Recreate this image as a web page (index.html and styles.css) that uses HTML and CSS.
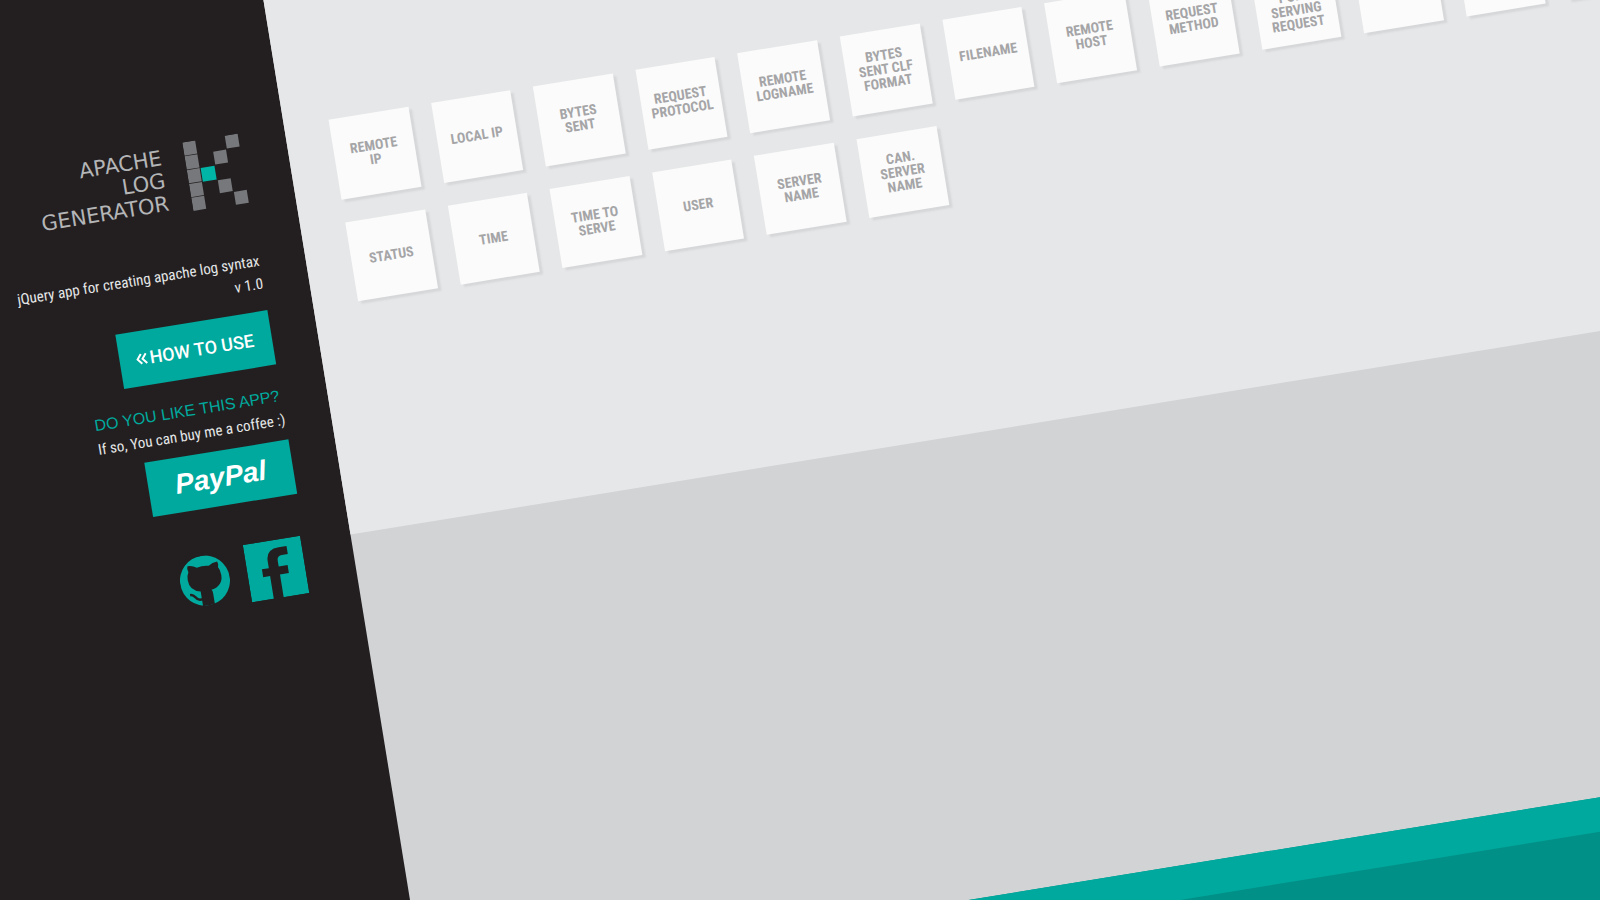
FILE: index.html
```html
<!DOCTYPE html>
<html lang="en">
<head>
<meta charset="utf-8">
<title>Apache Log Generator</title>
<link rel="stylesheet" href="styles.css">
</head>
<body>
<div class="stage">
  <aside class="sidebar">
    <div class="brand">
      <h1 class="brand-name">APACHE<br>LOG<br>GENERATOR</h1>
      <svg class="brand-mark" viewBox="0 0 57 71" aria-hidden="true">
        <g fill="#77787b">
          <rect x="0" y="0" width="13" height="13.300"/>
          <rect x="0" y="14" width="13" height="13.300"/>
          <rect x="0" y="28" width="13" height="13.300"/>
          <rect x="0" y="42" width="13" height="13.300"/>
          <rect x="0" y="56" width="13" height="13.300"/>
          <rect x="43" y="0" width="13" height="13"/>
          <rect x="29" y="14" width="13" height="13"/>
          <rect x="29" y="43" width="13" height="13"/>
          <rect x="43" y="57" width="13" height="13"/>
        </g>
        <rect x="14" y="28" width="14" height="14" fill="#00b5a5"/>
      </svg>
    </div>
    <p class="about">jQuery app for creating apache log syntax<br>v 1.0</p>
    <button class="btn how" type="button">
      <svg class="chevrons" viewBox="0 0 12 12" aria-hidden="true"><path d="M6 1L2 6l4 5M11 1L7 6l4 5" fill="none" stroke="#fff" stroke-width="2"/></svg>
      HOW TO USE
    </button>
    <h2 class="ask">DO YOU LIKE THIS APP?</h2>
    <p class="coffee">If so, You can buy me a coffee :)</p>
    <a class="btn paypal" href="#paypal">PayPal</a>
    <nav class="social">
      <a class="github" href="#github" aria-label="GitHub">
        <svg viewBox="0 0 50 50" aria-hidden="true">
          <circle cx="25" cy="25" r="25" fill="#00a99d"/>
          <path fill="#231f20" d="M10 8Q15 8 19 11Q25 9.500 31 11Q35 8 40 8Q41.500 11 40 14Q42 17 42 22Q42 33 30 35Q31 36 31 39V50H19V35Q8 33 8 22Q8 17 10 14Q8.500 11 10 8Z"/>
          <path fill="none" stroke="#231f20" stroke-width="2.500" d="M20 43Q15 44 13 40Q11 37 8 37"/>
        </svg>
      </a>
      <a class="facebook" href="#facebook" aria-label="Facebook">
        <svg viewBox="0 0 58 58" aria-hidden="true"><path fill="#00a99d" d="M0 0H58V58H32V35H41V27H32V21Q32 16 37 16H43V8H35Q22 8 22 20V27H15V35H22V58H0Z"/></svg>
      </a>
    </nav>
  </aside>
  <main class="board">
    <section class="palette">
      <ul class="tiles">
        <li class="tile">REMOTE<br>IP</li>
        <li class="tile">LOCAL IP</li>
        <li class="tile">BYTES<br>SENT</li>
        <li class="tile">REQUEST<br>PROTOCOL</li>
        <li class="tile">REMOTE<br>LOGNAME</li>
        <li class="tile">BYTES<br>SENT CLF<br>FORMAT</li>
        <li class="tile">FILENAME</li>
        <li class="tile">REMOTE<br>HOST</li>
        <li class="tile">REQUEST<br>METHOD</li>
        <li class="tile tile-low">PORT<br>SERVING<br>REQUEST</li>
        <li class="tile"></li>
        <li class="tile"></li>
        <li class="tile"></li>
        <li class="tile">STATUS</li>
        <li class="tile">TIME</li>
        <li class="tile">TIME TO<br>SERVE</li>
        <li class="tile">USER</li>
        <li class="tile">SERVER<br>NAME</li>
        <li class="tile">CAN.<br>SERVER<br>NAME</li>
      </ul>
    </section>
    <section class="drop"></section>
    <footer class="output"></footer>
  </main>
</div>
</body>
</html>
```

FILE: styles.css
```css
* { box-sizing: border-box; }

html, body { height: 100%; overflow: hidden; }

body {
  margin: 0;
  background: #231f20;
  font-family: "Roboto Condensed", "Liberation Sans Narrow", Roboto, sans-serif;
}

h1, h2, p, ul { margin: 0; padding: 0; font-weight: 400; }

/* The whole app is tilted about the window's top left corner;
   the extra 160px keep the lower left corner covered. */
.stage {
  display: grid;
  grid-template-columns: 420px 1fr;
  width: calc(100% + 160px);
  min-height: 130vh;
  margin-left: -160px;
  transform-origin: 160px 0;
  transform: rotate(-9.25deg);
}

.sidebar {
  display: flex;
  flex-direction: column;
  align-items: flex-end;
  padding: 170px 46px 0 0;
  background: #231f20;
  color: #e6e7e8;
  text-align: right;
}

.brand { display: flex; gap: 23px; align-items: center; }

.brand-name {
  font-family: "DejaVu Sans", sans-serif;
  font-size: 21px;
  line-height: 23px;
  color: #b4b5b7;
}

.brand-mark { width: 57px; height: 71px; }

.about {
  margin-top: 47px;
  font-size: 15px;
  line-height: 23px;
  white-space: nowrap;
}

.btn {
  display: flex;
  align-items: center;
  justify-content: center;
  height: 55px;
  border: 0;
  background: #00a99d;
  color: #fff;
  text-decoration: none;
}

.how {
  gap: 2px;
  width: 154px;
  margin-top: 15px;
  padding: 0 2px 0 0;
  font-family: Roboto, sans-serif;
  font-size: 18px;
  font-weight: 500;
}

.chevrons { width: 12px; height: 12px; }

.ask {
  margin: 20px 2px 0 0;
  font-family: "Liberation Sans", sans-serif;
  font-size: 16px;
  line-height: 24px;
  color: #00a99d;
}

.coffee { font-size: 15px; line-height: 24px; }

.paypal {
  width: 146px;
  margin-top: 8px;
  padding-bottom: 2px;
  font-family: "Liberation Sans", sans-serif;
  font-size: 28px;
  font-style: italic;
  font-weight: 700;
}

.social {
  display: flex;
  gap: 18px;
  align-items: center;
  margin: 42px 4px 0 0;
}

.social svg { display: block; width: 100%; }
.github { width: 50px; }
.facebook { width: 58px; }

.board {
  display: grid;
  grid-template-rows: 584px 460px 1fr;
  min-width: 0;
  background: #d1d3d4;
}

.palette { padding: 171px 0 0 45px; background: #e6e7e8; }

.tiles {
  display: grid;
  grid-template-columns: repeat(13, 1fr);
  gap: 23px;
  width: 1324px;
  list-style: none;
}

.tile {
  display: flex;
  align-items: center;
  justify-content: center;
  aspect-ratio: 1;
  min-width: 0;
  padding-bottom: 2px;
  background: #fbfbfb;
  box-shadow: 3px 3px 2px #d6d7d9;
  color: #a5a5a7;
  font-size: 14px;
  font-weight: 700;
  line-height: 14px;
  text-align: center;
}

.tile-low { padding: 14px 0 0; }

.output { border-top: 34px solid #00a99d; background: #009088; }
```
